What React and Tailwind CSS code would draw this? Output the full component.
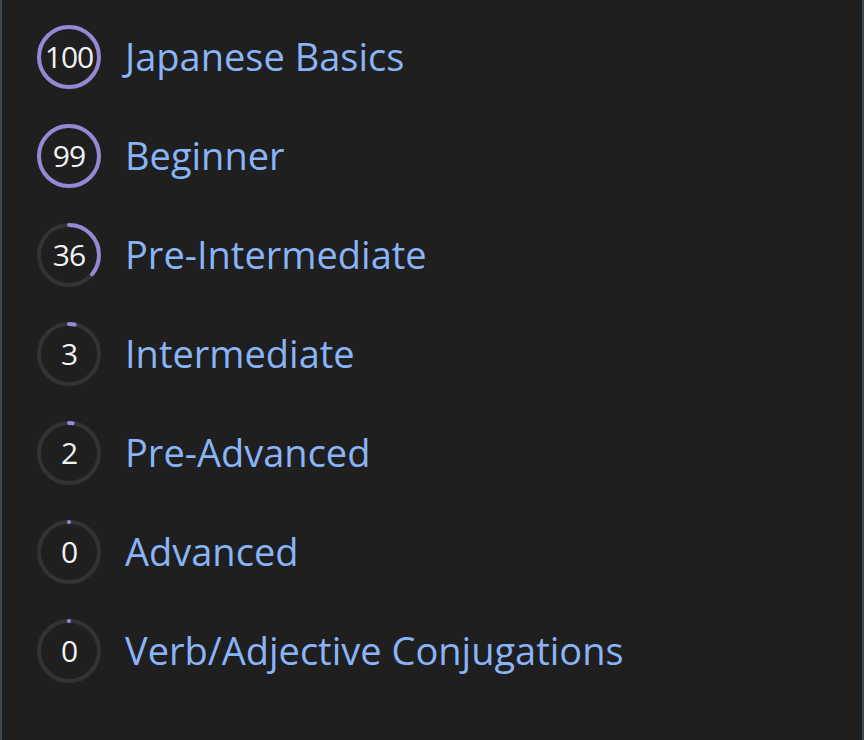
const levels = [
  { value: 100, name: "Japanese Basics" },
  { value: 99, name: "Beginner" },
  { value: 36, name: "Pre-Intermediate" },
  { value: 3, name: "Intermediate" },
  { value: 2, name: "Pre-Advanced" },
  { value: 0, name: "Advanced" },
  { value: 0, name: "Verb/Adjective Conjugations" },
];

const Ring = ({ value }) => {
  const r = 30;
  const c = 2 * Math.PI * r;
  const len = (value / 100) * c;
  return (
    <div className="relative size-16 shrink-0">
      <svg viewBox="0 0 64 64" className="size-16 -rotate-90">
        <circle cx="32" cy="32" r={r} fill="none" stroke="#333333" strokeWidth="4" />
        <circle
          cx="32"
          cy="32"
          r={r}
          fill="none"
          stroke="#9489d4"
          strokeWidth="4"
          strokeLinecap="round"
          strokeDasharray={`${len} ${c}`}
        />
      </svg>
      <span className="absolute inset-0 flex items-center justify-center text-[30px] font-medium text-[#f2f2f2] tracking-[-1px] leading-none">
        {value}
      </span>
    </div>
  );
};

export default function App() {
  return (
    <div
      className="h-[740px] w-[864px] bg-[#1f1f1f] border-x-2 border-[#3a4651] overflow-hidden"
      style={{ fontFamily: '"Open Sans", "Noto Sans", sans-serif' }}
    >
      <div className="flex flex-col gap-[35px] pt-[25px] pl-[35px]">
        {levels.map((l, i) => (
          <div key={i} className="flex items-center gap-[24px]">
            <Ring value={l.value} />
            <span className="text-[38px] text-[#8ab4f8] leading-none -mt-[2px]">{l.name}</span>
          </div>
        ))}
      </div>
    </div>
  );
}
